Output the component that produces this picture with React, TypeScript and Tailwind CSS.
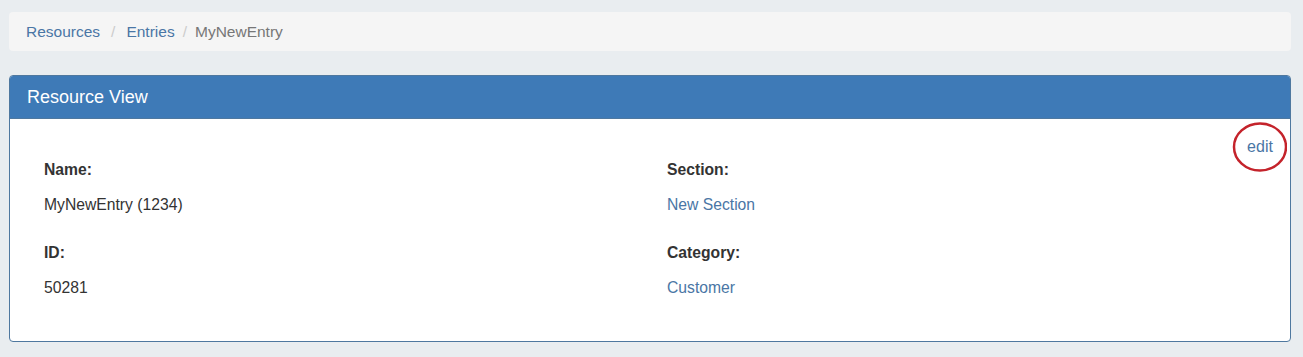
import React from "react";

export default function App() {
  const font = { fontFamily: '"Liberation Sans", Arial, sans-serif' };
  return (
    <div
      className="min-h-[357px] w-full bg-[#e9edf0] pt-[12px] pl-[9px] pr-[12px] text-[15.5px] text-[#333]"
      style={font}
    >
      <nav className="flex h-[39px] items-center rounded-[4px] bg-[#f5f5f5] pl-[17px] leading-[20px]">
        <a className="text-[#4a76a5]">Resources</a>
        <span className="px-[11px] text-[#ccc]">/</span>
        <a className="text-[#4a76a5]">Entries</a>
        <span className="px-[8px] text-[#ccc]">/</span>
        <span className="text-[#777]">MyNewEntry</span>
      </nav>

      <div className="mt-[24px] overflow-hidden rounded-[4px] border border-[#4f789f] bg-white">
        <div className="flex h-[42px] items-center bg-[#3e7ab7] pl-[17px] text-[18px] text-white">
          Resource View
        </div>
        <div className="relative border-t border-[#4f789f] pb-[43px] pl-[34px] pt-[41px] text-[15.7px] leading-[20px]">
          <div className="absolute right-[3px] top-[3px] flex h-[50px] w-[55px] items-center justify-center">
            <svg
              className="absolute inset-0"
              width="55"
              height="50"
              viewBox="0 0 55 50"
            >
              <ellipse
                cx="28"
                cy="25"
                rx="26"
                ry="23.5"
                fill="none"
                stroke="#c4232b"
                strokeWidth="2.5"
              />
            </svg>
            <a className="relative -mt-[1px] ml-[1px] text-[16px] text-[#4a76a5]">edit</a>
          </div>
          <div className="grid grid-cols-[623px_1fr]">
            <div>
              <div className="mb-[15px] font-bold">Name:</div>
              <div className="mb-[28px]">MyNewEntry (1234)</div>
              <div className="mb-[15px] font-bold">ID:</div>
              <div>50281</div>
            </div>
            <div>
              <div className="mb-[15px] font-bold">Section:</div>
              <div className="mb-[28px] text-[#4a76a5]">New Section</div>
              <div className="mb-[15px] font-bold">Category:</div>
              <div className="text-[#4a76a5]">Customer</div>
            </div>
          </div>
        </div>
      </div>
    </div>
  );
}
